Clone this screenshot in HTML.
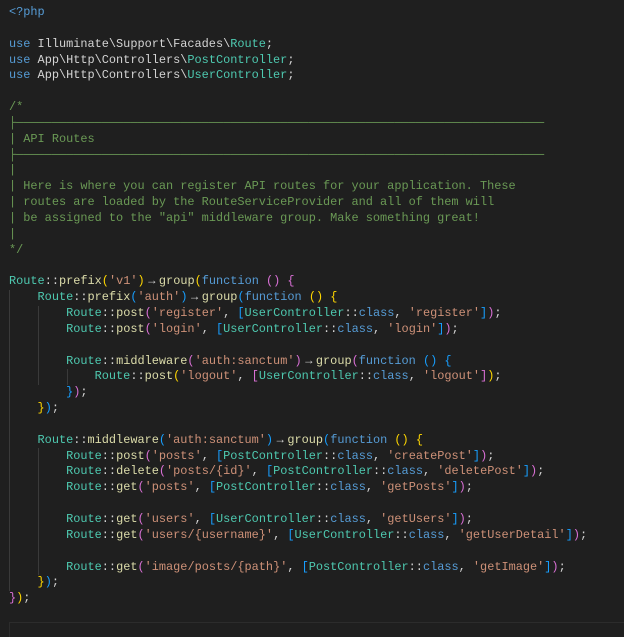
<!DOCTYPE html>
<html><head><meta charset="utf-8"><style>
html,body{margin:0;padding:0;background:#1f1f1f;width:624px;height:637px;overflow:hidden;position:relative}
pre{position:absolute;left:9px;top:5px;margin:0;font-family:"Liberation Mono","DejaVu Sans Mono",monospace;font-size:11.9px;line-height:15.84px;color:#d4d4d4;white-space:pre}
.k{color:#569cd6}.c{color:#4ec9b0}.f{color:#dcdcaa}.s{color:#ce9178}.m{color:#6a9955}
.y{color:#ffd700}.o{color:#da70d6}.b{color:#179fff}
.ar{display:inline-block;width:14.3px;text-align:center}
.g{position:absolute;width:1px;background:#3a3a3a}
.box{position:absolute;left:9px;top:622px;right:0;height:20px;border:1px solid #2c2c2c;border-right:none}
</style></head><body>
<div class="g" style="left:9px;top:290px;height:301px"></div>
<div class="g" style="left:38px;top:306px;height:79px"></div>
<div class="g" style="left:38px;top:448px;height:127px"></div>
<div class="g" style="left:67px;top:369px;height:16px"></div>
<div class="box"></div>
<pre><span class="k">&lt;?php</span>

<span class="k">use</span> Illuminate\Support\Facades\<span class="c">Route</span>;
<span class="k">use</span> App\Http\Controllers\<span class="c">PostController</span>;
<span class="k">use</span> App\Http\Controllers\<span class="c">UserController</span>;

<span class="m">/*
├──────────────────────────────────────────────────────────────────────────
| API Routes
├──────────────────────────────────────────────────────────────────────────
|
| Here is where you can register API routes for your application. These
| routes are loaded by the RouteServiceProvider and all of them will
| be assigned to the "api" middleware group. Make something great!
|
*/</span>

<span class="c">Route</span>::<span class="f">prefix</span><span class="y">(</span><span class="s">'v1'</span><span class="y">)</span><span class="ar">→</span><span class="f">group</span><span class="y">(</span><span class="k">function</span> <span class="o">()</span> <span class="o">{</span>
    <span class="c">Route</span>::<span class="f">prefix</span><span class="b">(</span><span class="s">'auth'</span><span class="b">)</span><span class="ar">→</span><span class="f">group</span><span class="b">(</span><span class="k">function</span> <span class="y">()</span> <span class="y">{</span>
        <span class="c">Route</span>::<span class="f">post</span><span class="o">(</span><span class="s">'register'</span>, <span class="b">[</span><span class="c">UserController</span>::<span class="k">class</span>, <span class="s">'register'</span><span class="b">]</span><span class="o">)</span>;
        <span class="c">Route</span>::<span class="f">post</span><span class="o">(</span><span class="s">'login'</span>, <span class="b">[</span><span class="c">UserController</span>::<span class="k">class</span>, <span class="s">'login'</span><span class="b">]</span><span class="o">)</span>;

        <span class="c">Route</span>::<span class="f">middleware</span><span class="o">(</span><span class="s">'auth:sanctum'</span><span class="o">)</span><span class="ar">→</span><span class="f">group</span><span class="o">(</span><span class="k">function</span> <span class="b">()</span> <span class="b">{</span>
            <span class="c">Route</span>::<span class="f">post</span><span class="y">(</span><span class="s">'logout'</span>, <span class="o">[</span><span class="c">UserController</span>::<span class="k">class</span>, <span class="s">'logout'</span><span class="o">]</span><span class="y">)</span>;
        <span class="b">}</span><span class="o">)</span>;
    <span class="y">}</span><span class="b">)</span>;

    <span class="c">Route</span>::<span class="f">middleware</span><span class="b">(</span><span class="s">'auth:sanctum'</span><span class="b">)</span><span class="ar">→</span><span class="f">group</span><span class="b">(</span><span class="k">function</span> <span class="y">()</span> <span class="y">{</span>
        <span class="c">Route</span>::<span class="f">post</span><span class="o">(</span><span class="s">'posts'</span>, <span class="b">[</span><span class="c">PostController</span>::<span class="k">class</span>, <span class="s">'createPost'</span><span class="b">]</span><span class="o">)</span>;
        <span class="c">Route</span>::<span class="f">delete</span><span class="o">(</span><span class="s">'posts/{id}'</span>, <span class="b">[</span><span class="c">PostController</span>::<span class="k">class</span>, <span class="s">'deletePost'</span><span class="b">]</span><span class="o">)</span>;
        <span class="c">Route</span>::<span class="f">get</span><span class="o">(</span><span class="s">'posts'</span>, <span class="b">[</span><span class="c">PostController</span>::<span class="k">class</span>, <span class="s">'getPosts'</span><span class="b">]</span><span class="o">)</span>;

        <span class="c">Route</span>::<span class="f">get</span><span class="o">(</span><span class="s">'users'</span>, <span class="b">[</span><span class="c">UserController</span>::<span class="k">class</span>, <span class="s">'getUsers'</span><span class="b">]</span><span class="o">)</span>;
        <span class="c">Route</span>::<span class="f">get</span><span class="o">(</span><span class="s">'users/{username}'</span>, <span class="b">[</span><span class="c">UserController</span>::<span class="k">class</span>, <span class="s">'getUserDetail'</span><span class="b">]</span><span class="o">)</span>;

        <span class="c">Route</span>::<span class="f">get</span><span class="o">(</span><span class="s">'image/posts/{path}'</span>, <span class="b">[</span><span class="c">PostController</span>::<span class="k">class</span>, <span class="s">'getImage'</span><span class="b">]</span><span class="o">)</span>;
    <span class="y">}</span><span class="b">)</span>;
<span class="o">}</span><span class="y">)</span>;</pre>
</body></html>
